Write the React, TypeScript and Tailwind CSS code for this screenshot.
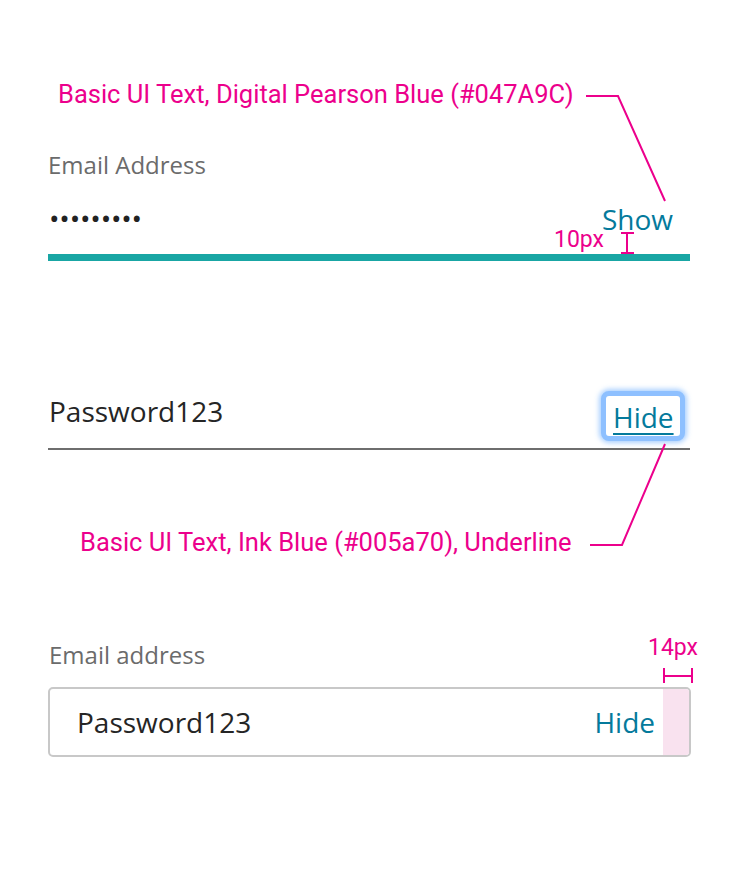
import React from "react";

const os = { fontFamily: '"Open Sans", "Noto Sans", sans-serif' };
const rb = { fontFamily: 'Roboto, "Liberation Sans", sans-serif' };

export default function App() {
  return (
    <div className="relative w-[740px] h-[870px] bg-white overflow-hidden" style={os}>
      <div className="ml-[48px] w-[642px] pt-[149px]">
        {/* Field 1 */}
        <div className="text-[24px] leading-[32px] text-[#6b6b6b]">Email Address</div>
        <div className="mt-[18px] flex justify-between items-start h-[38px]">
          <div className="text-[28px] leading-[38px] text-[#222] tracking-[-0.2px] pl-[1px]">•••••••••</div>
          <div className="mt-[1px] text-[28px] leading-[38px] text-[#047a9c] mr-[17px]">Show</div>
        </div>
        <div className="mt-[17px] h-[7px] bg-[#19a6a4]" />

        {/* Field 2 */}
        <div className="mt-[130px] flex justify-between items-start h-[50px]">
          <div className="mt-[1px] text-[28px] leading-[38px] text-[#252525] pl-[1px]">Password123</div>
          <button
            className="mr-[5px] w-[84px] h-[50px] rounded-[8px] border-[5px] border-[#8ec0ff] bg-white pt-[1px] pl-[7px] text-left shadow-[0_0_5px_2px_rgba(142,192,255,0.75)]"
            style={os}
          >
            <span className="block text-[28px] leading-[30px] text-[#047a9c] underline decoration-2 underline-offset-[5px]">Hide</span>
          </button>
        </div>
        <div className="mt-[7px] h-[2px] bg-[#6e6e6e]" />

        {/* Field 3 */}
        <div className="mt-[189px] text-[24px] leading-[32px] text-[#6b6b6b] pl-[1px]">Email address</div>
        <div className="mt-[16px] w-[643px] h-[70px] rounded-[5px] border-2 border-[#c8c8c8] flex items-stretch overflow-hidden">
          <div className="flex-1 flex items-center pl-[27px] text-[28px] leading-[38px] text-[#252525]">Password123</div>
          <div className="flex items-center text-[28px] leading-[38px] text-[#047a9c] mr-[8px]">Hide</div>
          <div className="w-[26px] bg-[#f9e2ef]" />
        </div>
      </div>

      {/* Annotations */}
      <div className="absolute left-[58px] top-[82px] text-[25.5px] leading-[25.5px] text-[#ec008c] whitespace-nowrap" style={rb}>
        Basic UI Text, Digital Pearson Blue (#047A9C)
      </div>
      <div className="absolute left-[554px] top-[228px] text-[23px] leading-[23px] text-[#ec008c]" style={rb}>10px</div>
      <div className="absolute left-[80px] top-[530px] text-[25.5px] leading-[25.5px] text-[#ec008c] whitespace-nowrap" style={rb}>
        Basic UI Text, Ink Blue (#005a70), Underline
      </div>
      <div className="absolute left-[648px] top-[636px] text-[23px] leading-[23px] text-[#ec008c]" style={rb}>14px</div>

      <svg className="absolute inset-0 pointer-events-none" width="740" height="870" viewBox="0 0 740 870">
        <g stroke="#ec008c" strokeWidth="2" fill="none">
          <polyline points="586,96 618,96 665,201" />
          <line x1="627" y1="233" x2="627" y2="253" />
          <line x1="621" y1="233" x2="634" y2="233" />
          <line x1="621" y1="253" x2="634" y2="253" />
          <polyline points="665,444 622,545 590,545" />
          <line x1="663" y1="676" x2="693" y2="676" />
          <line x1="664" y1="668" x2="664" y2="683" />
          <line x1="692" y1="668" x2="692" y2="683" />
        </g>
      </svg>
    </div>
  );
}
